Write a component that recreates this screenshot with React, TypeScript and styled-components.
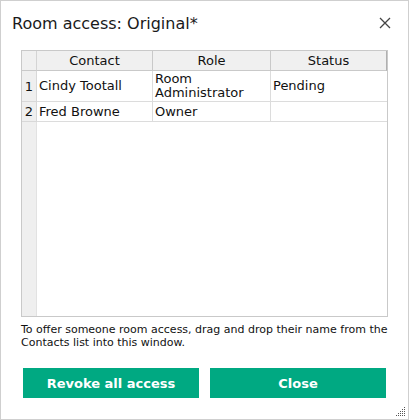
import React from "react";
import styled, { createGlobalStyle } from "styled-components";

const Global = createGlobalStyle`
  html, body { margin: 0; padding: 0; background: #fff; }
  body { font-family: "DejaVu Sans", "Liberation Sans", sans-serif; }
`;

const Window = styled.div`
  box-sizing: border-box;
  width: 409px;
  height: 420px;
  border: 1px solid #cfcfcf;
  background: #fff;
  position: relative;
  display: flex;
  flex-direction: column;
  padding: 0 20px 0 20px;
`;

const TitleBar = styled.div`
  height: 43px;
  display: flex;
  align-items: center;
  justify-content: space-between;
  margin: 0 -9px 0 -9px;
`;

const Title = styled.div`
  font-size: 16px;
  color: #1a1a1a;
  padding-top: 1px;
`;

const CloseX = styled.button`
  border: none;
  background: none;
  padding: 0;
  width: 16px;
  height: 16px;
  display: flex;
  align-items: center;
  justify-content: center;
  margin-right: 4px;
  cursor: pointer;
`;

const Grid = styled.div`
  margin-top: 6px;
  height: 267px;
  box-sizing: border-box;
  border: 1px solid #c9c9c9;
  display: grid;
  grid-template-columns: 15px 116px 118px 1fr;
  grid-template-rows: 20px 31px 20px 1fr;
  font-size: 13px;
  color: #111;
`;

const HeadCell = styled.div<{ $first?: boolean }>`
  background: #f0f0f0;
  border-bottom: 1px solid #c9c9c9;
  border-right: 1px solid ${(p) => (p.$first ? "#d4d4d4" : "#c9c9c9")};
  display: flex;
  align-items: center;
  justify-content: center;
  line-height: 15px;
  &:nth-child(4) { border-right: 1px solid #b0b0b0; }
`;

const NumCell = styled.div`
  background: #efefef;
  border-bottom: 1px solid #d8d8d8;
  border-right: 1px solid #d8d8d8;
  display: flex;
  align-items: center;
  justify-content: center;
  box-sizing: border-box;
`;

const Cell = styled.div`
  border-bottom: 1px solid #dcdcdc;
  border-right: 1px solid #dcdcdc;
  display: flex;
  align-items: center;
  padding: 0 2px;
  line-height: 14px;
  white-space: pre-line;
`;

const LastCell = styled(Cell)`
  border-right: none;
`;

const Gutter = styled.div`
  background: #efefef;
  border-right: 1px solid #e2e2e2;
`;

const Filler = styled.div`
  grid-column: 2 / 5;
`;

const Hint = styled.p`
  margin: 6px 0 0 0;
  font-size: 11px;
  line-height: 13px;
  color: #111;
`;

const Buttons = styled.div`
  display: flex;
  gap: 11px;
  margin: 19px 2px 0 2px;
`;

const Button = styled.button`
  flex: 1;
  height: 30px;
  border: none;
  background: #00a982;
  color: #fff;
  font-family: "DejaVu Sans", sans-serif;
  font-weight: bold;
  font-size: 13px;
  cursor: pointer;
`;

const Grip = styled.svg`
  position: absolute;
  right: 2px;
  bottom: 2px;
`;

const rows = [
  { n: 1, contact: "Cindy Tootall", role: "Room\nAdministrator", status: "Pending" },
  { n: 2, contact: "Fred Browne", role: "Owner", status: "" },
];

export default function App() {
  return (
    <>
      <Global />
      <Window>
        <TitleBar>
          <Title>Room access: Original*</Title>
          <CloseX aria-label="Close">
            <svg width="12" height="12" viewBox="0 0 12 12">
              <path d="M1 1L11 11M11 1L1 11" stroke="#444" strokeWidth="1.3" />
            </svg>
          </CloseX>
        </TitleBar>
        <Grid>
          <HeadCell $first />
          <HeadCell>Contact</HeadCell>
          <HeadCell>Role</HeadCell>
          <HeadCell>Status</HeadCell>
          {rows.map((r) => (
            <React.Fragment key={r.n}>
              <NumCell>{r.n}</NumCell>
              <Cell>{r.contact}</Cell>
              <Cell>{r.role}</Cell>
              <LastCell>{r.status}</LastCell>
            </React.Fragment>
          ))}
          <Gutter />
          <Filler />
        </Grid>
        <Hint>
          To offer someone room access, drag and drop their name from the Contacts list into this window.
        </Hint>
        <Buttons>
          <Button>Revoke all access</Button>
          <Button>Close</Button>
        </Buttons>
        <Grip width="12" height="12" viewBox="0 0 12 12">
          {[
            [10, 2], [8, 4], [10, 4], [6, 6], [8, 6], [10, 6], [4, 8], [6, 8], [8, 8], [10, 8],
            [2, 10], [4, 10], [6, 10], [8, 10], [10, 10],
          ].map(([x, y], i) => (
            <rect key={i} x={x} y={y} width="1" height="1" fill="#555" />
          ))}
        </Grip>
      </Window>
    </>
  );
}
